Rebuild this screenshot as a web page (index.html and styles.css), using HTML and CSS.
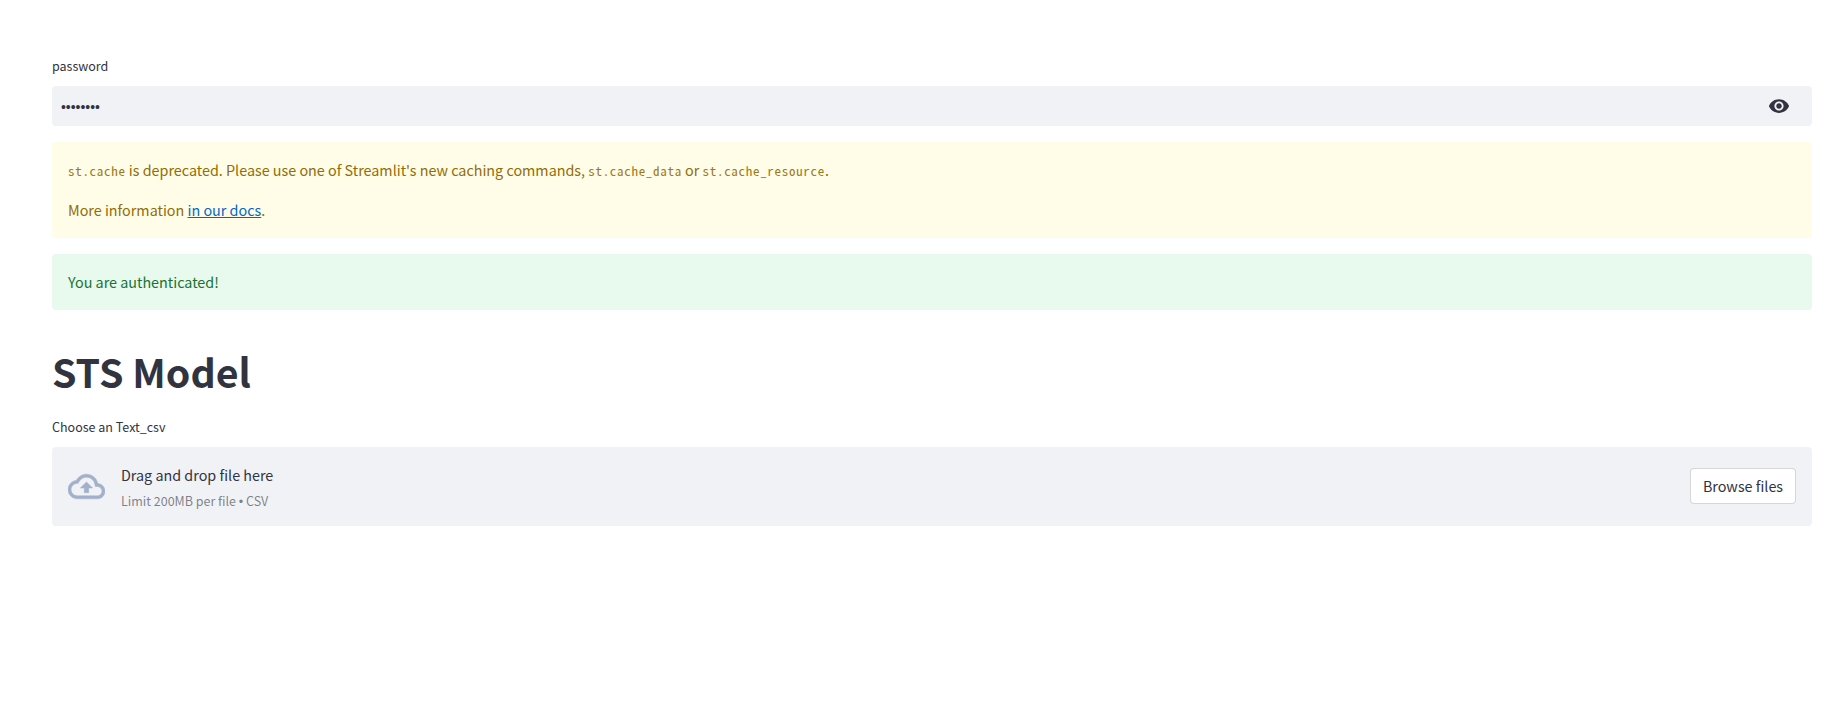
FILE: index.html
```html
<!DOCTYPE html>
<html lang="en">
<head>
<meta charset="utf-8">
<title>STS Model</title>
<link rel="stylesheet" href="styles.css">
</head>
<body>
<main class="page">
  <label class="field-label password-label" for="pw">password</label>
  <div class="password-box">
    <input class="password-input" id="pw" type="password" value="password">
    <svg class="eye" viewBox="0 0 24 24" aria-hidden="true"><path d="M12 4.5C7 4.5 2.73 7.61 1 12c1.73 4.39 6 7.5 11 7.5s9.27-3.11 11-7.5c-1.73-4.39-6-7.5-11-7.5zM12 17c-2.76 0-5-2.24-5-5s2.24-5 5-5 5 2.24 5 5-2.24 5-5 5zm0-8c-1.66 0-3 1.34-3 3s1.34 3 3 3 3-1.34 3-3-1.34-3-3-3z"/></svg>
  </div>
  <div class="alert warning">
    <p><code>st.cache</code> is deprecated. Please use one of Streamlit's new caching commands, <code>st.cache_data</code> or <code>st.cache_resource</code>.</p>
    <p>More information <a href="#">in our docs</a>.</p>
  </div>
  <div class="alert success">
    <p>You are authenticated!</p>
  </div>
  <h1 class="title">STS Model</h1>
  <label class="field-label upload-label">Choose an Text_csv</label>
  <section class="dropzone">
    <svg class="cloud" viewBox="0 0 24 24" aria-hidden="true"><path d="M19.35 10.04C18.67 6.59 15.64 4 12 4 9.11 4 6.6 5.64 5.35 8.04 2.34 8.36 0 10.91 0 14c0 3.31 2.69 6 6 6h13c2.76 0 5-2.24 5-5 0-2.64-2.05-4.78-4.65-4.96zM19 18H6c-2.21 0-4-1.79-4-4 0-2.05 1.53-3.76 3.56-3.97l1.07-.11.5-.95C8.08 7.14 9.94 6 12 6c2.62 0 4.88 1.86 5.39 4.43l.3 1.5 1.53.11c1.56.1 2.78 1.41 2.78 2.96 0 1.65-1.35 3-3 3zM8 13h2.55v3h2.9v-3H16l-4-4z"/></svg>
    <div class="drop-text">
      <span class="drop-title">Drag and drop file here</span>
      <small class="drop-limit">Limit 200MB per file <span class="dot">•</span> CSV</small>
    </div>
    <button class="browse" type="button">Browse files</button>
  </section>
</main>
</body>
</html>
```

FILE: styles.css
```css
* { box-sizing: border-box; }

html, body {
  margin: 0;
  background: #fff;
}

body {
  font-family: "Noto Sans CJK SC", "Noto Sans", sans-serif;
  color: #31333f;
  font-size: 14.35px;
}

.page {
  display: flex;
  flex-direction: column;
  padding: 56px 22px 0 52px;
}

.field-label {
  display: block;
  font-size: 12.5px;
  line-height: 20px;
}

.password-box {
  display: flex;
  align-items: center;
  height: 40px;
  margin-top: 10px;
  background: #f0f2f6;
  border-radius: 4px;
}

.password-input {
  flex: 1;
  min-width: 0;
  height: 100%;
  padding: 1px 9px 0;
  border: 0;
  outline: 0;
  background: transparent;
  color: #31333f;
  font: 13.9px "Liberation Sans", sans-serif;
}

.eye {
  width: 22px;
  height: 22px;
  margin-right: 22px;
  fill: #31333f;
}

.alert {
  padding: 15px 16px;
  border-radius: 4px;
}

.alert p {
  margin: 0;
  line-height: 25.6px;
}

.alert p + p {
  margin-top: 14px;
}

.warning {
  margin-top: 16px;
  padding-bottom: 16px;
  background: #fffde7;
  color: #926c05;
}

.warning code {
  font-family: "Noto Sans Mono CJK SC", "DejaVu Sans Mono", monospace;
  font-size: 13px;
  letter-spacing: 0.7px;
  line-height: 1;
  opacity: 0.9;
}

.warning a {
  color: #0068c9;
}

.success {
  margin-top: 16px;
  background: #e8f9ee;
  color: #177233;
}

.title {
  margin: 31px 0 0;
  font-size: 39.3px;
  line-height: 60px;
  font-weight: 700;
}

.upload-label {
  margin-top: 16px;
}

.dropzone {
  display: flex;
  align-items: center;
  height: 79px;
  margin-top: 10px;
  padding: 0 16px;
  background: #f0f2f6;
  border-radius: 4px;
}

.cloud {
  flex: none;
  width: 37px;
  height: 37px;
  fill: #a3b0ca;
  stroke: #a3b0ca;
  stroke-width: 0.3;
}

.drop-text {
  display: flex;
  flex: 1;
  flex-direction: column;
  margin-left: 16px;
  padding-top: 5px;
}

.drop-title {
  line-height: 24px;
}

.drop-limit {
  margin-top: 2px;
  font-size: 12.5px;
  line-height: 24px;
  color: rgba(49, 51, 63, 0.6);
}

.dot {
  font-family: "Liberation Sans", sans-serif;
}

.browse {
  height: 36px;
  width: 106px;
  padding: 0 0 2px;
  background: #fff;
  border: 1px solid rgba(49, 51, 63, 0.2);
  border-radius: 4px;
  color: #31333f;
  font: 14.35px "Noto Sans CJK SC", sans-serif;
}
```
